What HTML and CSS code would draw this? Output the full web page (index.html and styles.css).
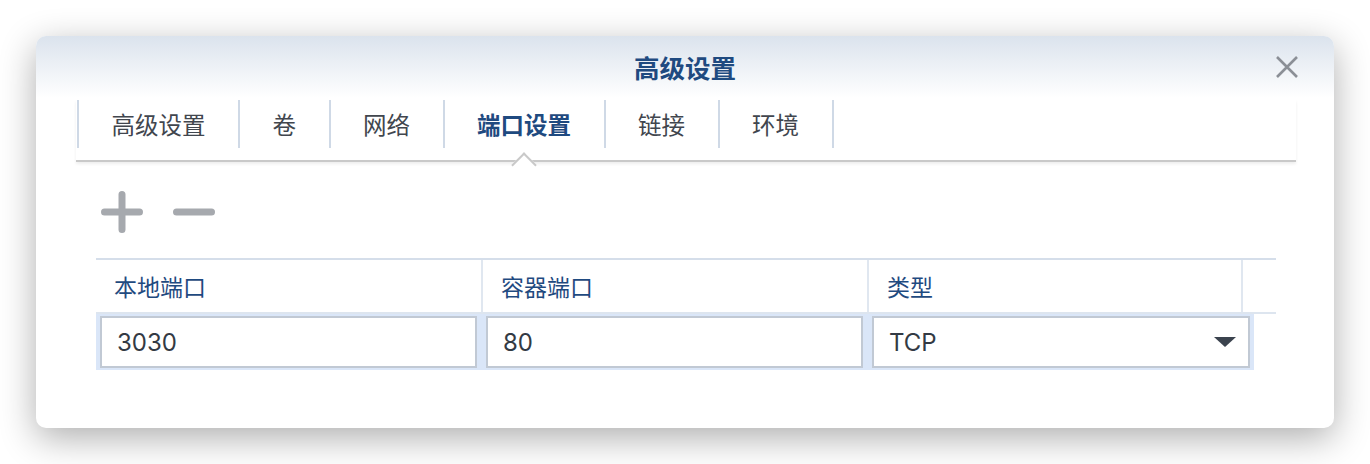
FILE: index.html
```html
<!DOCTYPE html>
<html lang="zh-CN">
<head>
<meta charset="utf-8">
<title>高级设置</title>
<link rel="stylesheet" href="styles.css">
</head>
<body>
<div class="dialog">
  <div class="header">
    <div class="title">高级设置</div>
    <button class="close" aria-label="关闭">
      <svg width="24" height="24" viewBox="0 0 24 24"><path d="M2 2 L22 22 M22 2 L2 22" stroke="#8b8f96" stroke-width="2.6" fill="none"/></svg>
    </button>
  </div>
  <div class="content">
    <div class="tabs">
      <div class="tab first">高级设置</div>
      <div class="tab">卷</div>
      <div class="tab">网络</div>
      <div class="tab active">端口设置</div>
      <div class="tab">链接</div>
      <div class="tab">环境</div>
    </div>
    <div class="toolbar">
      <span class="icon-btn">
        <svg width="42" height="42" viewBox="0 0 42 42"><path d="M21 3.5 V38.5 M3.5 21 H38.5" stroke="#a6a9ae" stroke-width="7" stroke-linecap="round" fill="none"/></svg>
      </span>
      <span class="icon-btn">
        <svg width="42" height="42" viewBox="0 0 42 42"><path d="M3.5 21 H38.5" stroke="#a6a9ae" stroke-width="7" stroke-linecap="round" fill="none"/></svg>
      </span>
    </div>
    <div class="grid">
      <div class="grid-head">
        <div class="th">本地端口</div>
        <div class="th">容器端口</div>
        <div class="th">类型</div>
        <div class="th last"></div>
      </div>
      <div class="grid-row">
        <div class="field">3030</div>
        <div class="field">80</div>
        <div class="field select">
          <span>TCP</span>
          <svg width="22" height="10" viewBox="0 0 22 10"><path d="M0 0 H22 L11 10 Z" fill="#3b434e"/></svg>
        </div>
      </div>
    </div>
  </div>
</div>
</body>
</html>
```
FILE: styles.css
```css
html, body {
  margin: 0;
  padding: 0;
  background: #ffffff;
}
body {
  font-family: "Inter", "Noto Sans CJK SC", sans-serif;
  padding: 36px;
  width: 1298px;
}
.dialog {
  width: 1298px;
  height: 392px;
  background: #ffffff;
  border-radius: 10px;
  box-shadow: 0 10px 36px rgba(0, 0, 0, 0.32);
  position: relative;
  overflow: hidden;
}
.header {
  height: 62px;
  background: linear-gradient(#dbe3ed, #ffffff);
  display: flex;
  align-items: center;
  justify-content: center;
}
.title {
  font-family: "Noto Sans CJK SC", sans-serif;
  font-size: 25.5px;
  font-weight: 700;
  color: #1f4a80;
  margin-top: -1px;
}
.close {
  position: absolute;
  top: 19px;
  right: 35px;
  width: 24px;
  height: 24px;
  padding: 0;
  border: 0;
  background: none;
}
.close svg { display: block; }
.content {
  padding: 2px 38px 0 40px;
}
.tabs {
  display: flex;
  height: 60px;
  border-bottom: 2px solid #c9c9c9;
  box-shadow: 0 2px 3px rgba(0, 0, 0, 0.07);
  position: relative;
}
.tab {
  height: 48px;
  padding: 0 32.5px;
  border-right: 2px solid #cfd9e6;
  display: flex;
  align-items: center;
  font-family: "Noto Sans CJK SC", sans-serif;
  font-size: 23.5px;
  color: #41464e;
  position: relative;
}
.tab.first {
  border-left: 2px solid #cfd9e6;
  margin-left: 1px;
}
.tab.active {
  color: #1f4a80;
  font-weight: 700;
}
.tab.active::after {
  content: "";
  position: absolute;
  left: 50%;
  top: 56px;
  width: 16px;
  height: 16px;
  margin-left: -9px;
  background: #ffffff;
  border-top: 2px solid #c9c9c9;
  border-left: 2px solid #c9c9c9;
  transform: rotate(45deg);
}
.toolbar {
  display: flex;
  gap: 30px;
  padding: 29px 0 0 25px;
  height: 42px;
}
.icon-btn { display: block; height: 42px; }
.icon-btn svg { display: block; }
.grid {
  margin: 25px 20px 0 20px;
}
.grid-head {
  display: grid;
  grid-template-columns: 387px 386px 374px 1fr;
  height: 56px;
  box-sizing: border-box;
  border-top: 2px solid #d5deea;
  border-bottom: 2px solid #dde5ef;
}
.th {
  border-right: 2px solid #e0e7f0;
  display: flex;
  align-items: center;
  padding-left: 18px;
  font-family: "Noto Sans CJK SC", sans-serif;
  font-size: 23px;
  color: #1f4a80;
}
.th.last { border-right: 0; }
.grid-row {
  width: 1158px;
  box-sizing: border-box;
  height: 56px;
  padding: 2px 4px;
  background: #dae6f8;
  display: flex;
  gap: 9px;
}
.field {
  width: 377px;
  height: 52px;
  box-sizing: border-box;
  border: 2px solid #c1c9d4;
  background: #ffffff;
  display: flex;
  align-items: center;
  padding: 0 12px 0 15px;
  font-size: 24px;
  color: #333a44;
}
.field.select {
  width: 378px;
  justify-content: space-between;
}
```
